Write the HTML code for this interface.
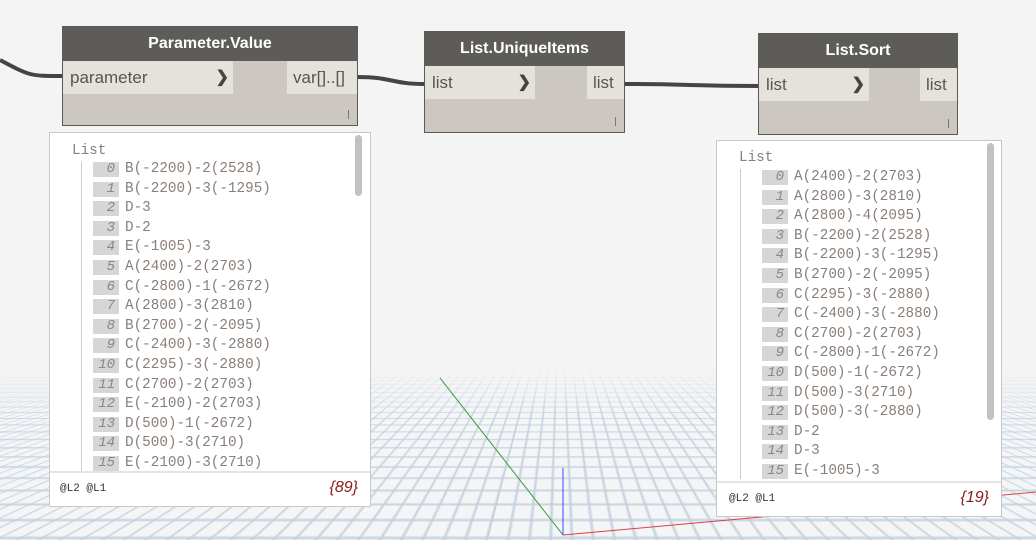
<!DOCTYPE html>
<html><head><meta charset="utf-8"><style>
body{margin:0;width:1036px;height:540px;overflow:hidden;background:#f4f4f4;position:relative;font-family:"Liberation Sans",sans-serif}
.floor{position:absolute;left:0;top:365px;width:1036px;height:175px;overflow:hidden;perspective:300px;perspective-origin:560px -30px}
.plane{position:absolute;left:-1500px;top:0;width:4000px;height:1400px;transform-origin:50% 0;transform:rotateX(76deg);
background-color:#f3f5f7;
background-image:linear-gradient(#c3d0dc 1px,transparent 1px),linear-gradient(90deg,#c3d0dc 1px,transparent 1px);
background-size:8px 8px}
.fade{position:absolute;left:0;top:365px;width:1036px;height:50px;background:linear-gradient(#f4f4f4,rgba(244,244,244,0))}
.node{position:absolute;background:#ccc8c1;border:1px solid #5c5a57;box-sizing:border-box}
.hd{background:#5e5c59;color:#fff;font-weight:bold;font-size:16px;text-align:center;height:34px;line-height:34px}
.port{position:absolute;background:#e5e2dc;color:#555;font-size:17px;height:33px;line-height:33px;box-sizing:border-box}
.arr{position:absolute;right:4px;top:0;font-weight:bold;color:#444;font-size:16px}
.bar{position:absolute;right:8px;bottom:6px;width:1px;height:9px;background:#777}
.pv{position:absolute;background:#fff;border:1px solid #c8c8c8;box-sizing:border-box;font-family:"Liberation Mono",monospace;font-size:14.3px;color:#8a7f78}
.row{position:absolute;height:19.6px;line-height:19.6px;white-space:nowrap}
.ix{display:inline-block;width:26px;background:#d6d6d6;text-align:right;padding-right:4px;box-sizing:border-box;font-style:italic;color:#888;margin-right:6px;height:15px;line-height:15px;font-size:14px}
.foot{position:absolute;left:0;right:0;bottom:0;height:33px;border-top:2px solid #e4e4e4;font-size:11px;color:#333}
.cnt{position:absolute;right:12px;top:6px;font-family:"Liberation Sans",sans-serif;font-style:italic;font-size:16px;color:#8b1a1a}
.sb{position:absolute;width:7px;background:#c2c2c2;border-radius:4px}
.vl{position:absolute;width:1px;background:#ccc}
</style></head><body>
<div class="floor"><div class="plane"></div></div>
<div class="fade"></div>
<svg width="1036" height="540" style="position:absolute;left:0;top:0">
<line x1="440" y1="378" x2="563" y2="535" stroke="#3a9a3a" stroke-width="1"/>
<line x1="563" y1="468" x2="563" y2="535" stroke="#4444ff" stroke-width="1"/>
<line x1="563" y1="535" x2="1036" y2="492" stroke="#e04040" stroke-width="1"/>
<path d="M0 60 C30 76,30 76,62 76" stroke="#444" stroke-width="4" fill="none"/>
<path d="M357 77 C392 77,392 84,424 84" stroke="#444" stroke-width="4" fill="none"/>
<path d="M624 84 C690 84,690 86,758 86" stroke="#444" stroke-width="4" fill="none"/>
</svg>

<div class="node" style="left:62px;top:26px;width:296px;height:100px">
<div class="hd">Parameter.Value</div>
<div class="port" style="left:0;top:34px;width:170px;padding-left:7px">parameter<span class="arr">&#x276F;</span></div>
<div class="port" style="right:0;top:34px;width:70px;padding-left:6px">var[]..[]</div>
<div class="bar"></div></div>

<div class="node" style="left:424px;top:31px;width:201px;height:102px">
<div class="hd">List.UniqueItems</div>
<div class="port" style="left:0;top:34px;width:110px;padding-left:7px">list<span class="arr">&#x276F;</span></div>
<div class="port" style="right:0;top:34px;width:37px;padding-left:6px">list</div>
<div class="bar"></div></div>

<div class="node" style="left:758px;top:33px;width:200px;height:102px">
<div class="hd">List.Sort</div>
<div class="port" style="left:0;top:34px;width:110px;padding-left:7px">list<span class="arr">&#x276F;</span></div>
<div class="port" style="right:0;top:34px;width:37px;padding-left:6px">list</div>
<div class="bar"></div></div>

<div class="pv" style="left:49px;top:132px;width:322px;height:375px">
<div class="row" style="left:22px;top:9px">List</div>
<div class="vl" style="left:31px;top:29px;height:310px"></div>
<div class="sb" style="left:305px;top:2px;height:61px"></div>
<div style="position:absolute;left:43px;top:27px">
<div class="row" style="top:0"><span class="ix">0</span>B(-2200)-2(2528)</div>
<div class="row" style="top:19.6px"><span class="ix">1</span>B(-2200)-3(-1295)</div>
<div class="row" style="top:39.2px"><span class="ix">2</span>D-3</div>
<div class="row" style="top:58.8px"><span class="ix">3</span>D-2</div>
<div class="row" style="top:78.4px"><span class="ix">4</span>E(-1005)-3</div>
<div class="row" style="top:98px"><span class="ix">5</span>A(2400)-2(2703)</div>
<div class="row" style="top:117.6px"><span class="ix">6</span>C(-2800)-1(-2672)</div>
<div class="row" style="top:137.2px"><span class="ix">7</span>A(2800)-3(2810)</div>
<div class="row" style="top:156.8px"><span class="ix">8</span>B(2700)-2(-2095)</div>
<div class="row" style="top:176.4px"><span class="ix">9</span>C(-2400)-3(-2880)</div>
<div class="row" style="top:196px"><span class="ix">10</span>C(2295)-3(-2880)</div>
<div class="row" style="top:215.6px"><span class="ix">11</span>C(2700)-2(2703)</div>
<div class="row" style="top:235.2px"><span class="ix">12</span>E(-2100)-2(2703)</div>
<div class="row" style="top:254.8px"><span class="ix">13</span>D(500)-1(-2672)</div>
<div class="row" style="top:274.4px"><span class="ix">14</span>D(500)-3(2710)</div>
<div class="row" style="top:294px"><span class="ix">15</span>E(-2100)-3(2710)</div>
</div>
<div class="foot" style="background:#fff"><span style="position:absolute;left:10px;top:10px">@L2 @L1</span><span class="cnt">{89}</span></div>
</div>

<div class="pv" style="left:716px;top:140px;width:286px;height:377px">
<div class="row" style="left:22px;top:8px">List</div>
<div class="vl" style="left:23px;top:28px;height:310px"></div>
<div class="sb" style="left:270px;top:2px;height:277px"></div>
<div style="position:absolute;left:45px;top:27px">
<div class="row" style="top:0"><span class="ix">0</span>A(2400)-2(2703)</div>
<div class="row" style="top:19.6px"><span class="ix">1</span>A(2800)-3(2810)</div>
<div class="row" style="top:39.2px"><span class="ix">2</span>A(2800)-4(2095)</div>
<div class="row" style="top:58.8px"><span class="ix">3</span>B(-2200)-2(2528)</div>
<div class="row" style="top:78.4px"><span class="ix">4</span>B(-2200)-3(-1295)</div>
<div class="row" style="top:98px"><span class="ix">5</span>B(2700)-2(-2095)</div>
<div class="row" style="top:117.6px"><span class="ix">6</span>C(2295)-3(-2880)</div>
<div class="row" style="top:137.2px"><span class="ix">7</span>C(-2400)-3(-2880)</div>
<div class="row" style="top:156.8px"><span class="ix">8</span>C(2700)-2(2703)</div>
<div class="row" style="top:176.4px"><span class="ix">9</span>C(-2800)-1(-2672)</div>
<div class="row" style="top:196px"><span class="ix">10</span>D(500)-1(-2672)</div>
<div class="row" style="top:215.6px"><span class="ix">11</span>D(500)-3(2710)</div>
<div class="row" style="top:235.2px"><span class="ix">12</span>D(500)-3(-2880)</div>
<div class="row" style="top:254.8px"><span class="ix">13</span>D-2</div>
<div class="row" style="top:274.4px"><span class="ix">14</span>D-3</div>
<div class="row" style="top:294px"><span class="ix">15</span>E(-1005)-3</div>
</div>
<div class="foot" style="background:#fff"><span style="position:absolute;left:12px;top:10px">@L2 @L1</span><span class="cnt">{19}</span></div>
</div>
</body></html>
